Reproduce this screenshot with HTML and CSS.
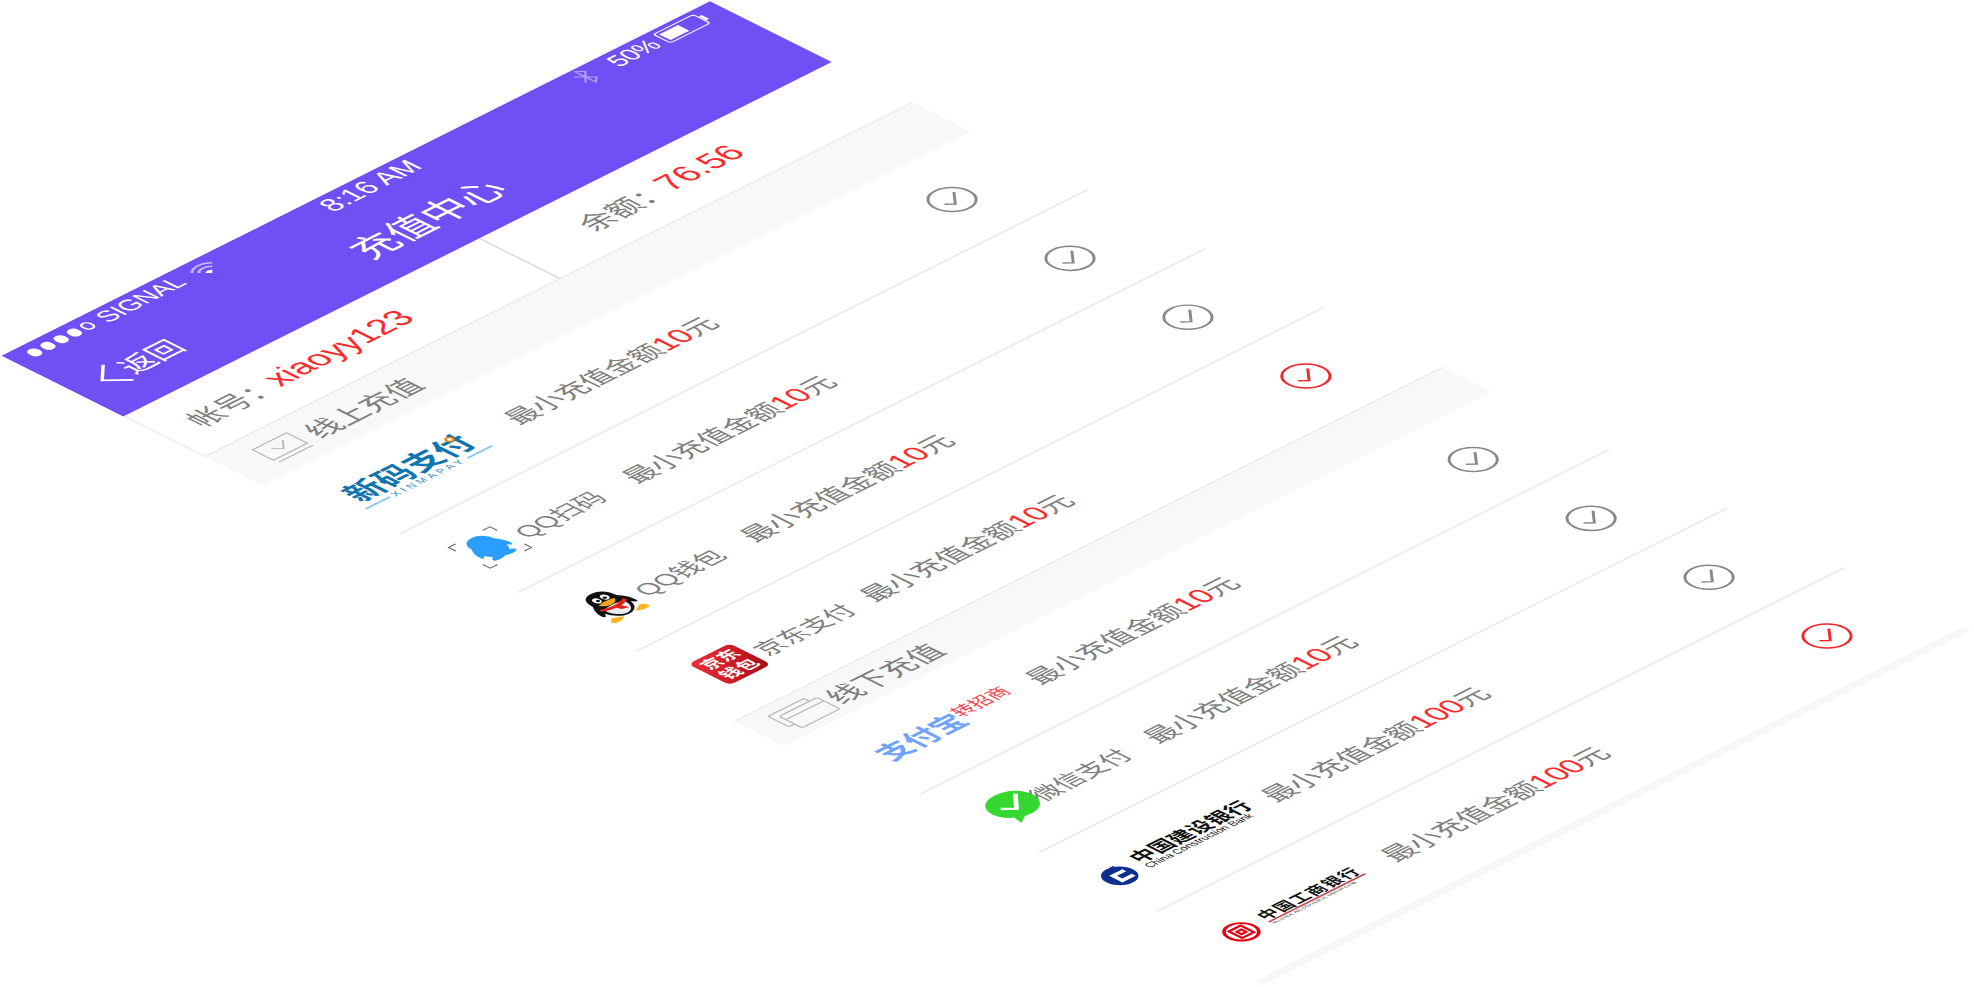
FILE: index.html
```html
<!DOCTYPE html>
<html lang="zh">
<head>
<meta charset="utf-8">
<title>充值中心</title>
<link rel="stylesheet" href="styles.css">
</head>
<body>
<div class="phone">
  <header class="head">
    <div class="status">
      <div class="status-l">
        <span class="dots"><i></i><i></i><i></i><i></i><i class="hollow"></i></span>
        <span class="signal">SIGNAL</span>
        <svg class="wifi" viewBox="0 0 14 10"><path d="M1 4a8.500 8.500 0 0 1 12 0" class="wf1"/><path d="M3 6a5.600 5.600 0 0 1 8 0" class="wf1"/><path d="M5 8a2.800 2.800 0 0 1 4 0L7 10z" class="wf2"/></svg>
      </div>
      <span class="time">8:16 AM</span>
      <div class="status-r">
        <svg class="bt" viewBox="0 0 8 12"><path d="M1 3l6 6-3 2.500V.5L7 3 1 9" /></svg>
        <span class="pct">50%</span>
        <svg class="batt" viewBox="0 0 24 10"><rect x=".5" y=".5" width="21" height="9" rx="1.500" class="bo"/><rect x="2" y="2" width="10" height="6" class="bf"/><rect x="22" y="3" width="1.500" height="4" class="bf"/></svg>
      </div>
    </div>
    <div class="nav">
      <div class="back">
        <svg class="chev" viewBox="0 0 11 18"><path d="M10 1L1.500 9 10 17"/></svg>
        <span>返回</span>
      </div>
      <h1 class="title">充值中心</h1>
    </div>
  </header>

  <section class="info">
    <div class="cell">帐号：<b class="red acct">xiaoyy123</b></div>
    <div class="cell cell-r">余额：<b class="red bal">76.56</b></div>
  </section>

  <div class="group g1">
    <svg class="gi" viewBox="0 0 20 15"><rect x=".5" y=".5" width="18" height="11"/><path d="M6 5l3.500 3 4-4.500"/><path d="M1 14h18"/></svg>
    <span>线上充值</span>
  </div>

  <div class="row line">
    <div class="brand">
      <div class="xm">
        <span class="xm-t">新码支付</span>
        <i class="xm-dot"></i>
        <div class="xm-s"><i></i><span>XINMAPAY</span><i></i></div>
      </div>
    </div>
    <div class="min">最小充值金额<em>10</em>元</div>
    <svg class="chk" viewBox="0 0 20 20"><circle cx="10" cy="10" r="9"/><path d="M5.500 10.500l3 2.700 6-6.700"/></svg>
  </div>

  <div class="row line">
    <div class="brand">
      <svg class="ic-qq" viewBox="0 0 21 21">
        <path class="brk" d="M.5 4V.5H4M17 .5h3.500V4M20.500 17v3.500H17M4 20.500H.5V17"/>
        <path class="qqb" transform="translate(-2.100 -2.100) scale(1.200)" d="M10.500 3C7.600 3 6 5.200 6 7.600 5 9 4 11.300 4.400 13.400c.4.600 1 0 1.500-.9.200 1 .8 1.900 1.400 2.500-1 .3-1.600 1-1.300 1.600.7.900 3.200.7 4.500 0 1.300.7 3.800.9 4.500 0 .3-.6-.3-1.300-1.300-1.600.6-.6 1.200-1.500 1.400-2.500.5.900 1.100 1.500 1.500.9.400-2.100-.6-4.400-1.600-5.800C15 5.200 13.400 3 10.500 3z"/>
      </svg>
      <span class="lab">QQ扫码</span>
    </div>
    <div class="min">最小充值金额<em>10</em>元</div>
    <svg class="chk" viewBox="0 0 20 20"><circle cx="10" cy="10" r="9"/><path d="M5.500 10.500l3 2.700 6-6.700"/></svg>
  </div>

  <div class="row line">
    <div class="brand">
      <svg class="ic-pg" viewBox="0 0 20 22">
        <path fill="#fbb21f" d="M3 18c-2 1-3 3-1 3.500 2 .3 4-.3 5-1.500zM17 18c2 1 3 3 1 3.500-2 .3-4-.3-5-1.500z"/>
        <path fill="#111" d="M10 .5C5.500.5 4 4 4 7.500c-1.500 2-3 5-2.500 8 .5.800 1.500-.5 2-1.500C4 17 6.500 20 10 20s6-3 6.500-6c.5 1 1.500 2.300 2 1.500.5-3-1-6-2.500-8C16 4 14.500.5 10 .5z"/>
        <path fill="#e9eef4" d="M5.200 12c1.500-1 8-1 9.600 0 .7 3-1.500 7-4.800 7s-5.500-4-4.800-7z"/>
        <ellipse fill="#fff" cx="8" cy="5.500" rx="1.500" ry="2"/><ellipse fill="#fff" cx="12" cy="5.500" rx="1.500" ry="2"/>
        <circle fill="#111" cx="8.300" cy="5.800" r=".8"/><circle fill="#111" cx="11.700" cy="5.800" r=".8"/>
        <path fill="#f9a61a" d="M6 8.500c2-1 6-1 8 0-1 1.800-2.500 2.500-4 2.500S7 10.300 6 8.500z"/>
        <path fill="#e0221a" d="M4 10.500c3 2 9 2 12 0l.4 1.800c-1.300.8-2.900 1.300-4.400 1.500l1.200 3-3-1-.7-2c-2-.1-4-.7-5.700-1.700z"/>
      </svg>
      <span class="lab">QQ钱包</span>
    </div>
    <div class="min">最小充值金额<em>10</em>元</div>
    <svg class="chk" viewBox="0 0 20 20"><circle cx="10" cy="10" r="9"/><path d="M5.500 10.500l3 2.700 6-6.700"/></svg>
  </div>

  <div class="row">
    <div class="brand">
      <div class="jd"><span>京东</span><span>钱包</span></div>
      <span class="lab">京东支付</span>
    </div>
    <div class="min">最小充值金额<em>10</em>元</div>
    <svg class="chk on" viewBox="0 0 20 20"><circle cx="10" cy="10" r="9"/><path d="M5.500 10.500l3 2.700 6-6.700"/></svg>
  </div>

  <div class="group g2">
    <svg class="gi gi2" viewBox="0 0 24 16"><rect x=".5" y=".5" width="19" height="11" rx="1"/><rect x="3.500" y="3.500" width="20" height="12" rx="1" class="gw"/><path d="M3.500 7h20"/></svg>
    <span>线下充值</span>
  </div>

  <div class="row line">
    <div class="brand">
      <div class="ali"><span class="ali-t">支付宝</span><span class="ali-s">转招商</span></div>
    </div>
    <div class="min">最小充值金额<em>10</em>元</div>
    <svg class="chk" viewBox="0 0 20 20"><circle cx="10" cy="10" r="9"/><path d="M5.500 10.500l3 2.700 6-6.700"/></svg>
  </div>

  <div class="row line">
    <div class="brand">
      <svg class="ic-wx" viewBox="0 0 14 14"><path fill="#35d82f" d="M7 .5C3.200.5.500 3 .5 6.200c0 1.900 1 3.500 2.500 4.500l-.5 2.800 2.800-1.600c.5.100 1.100.2 1.700.2 3.800 0 6.500-2.700 6.500-5.900S10.800.5 7 .5z"/><path fill="none" stroke="#fff" stroke-width="1.100" d="M3.600 5.800l2.700 2.400 4.600-5"/></svg>
      <span class="lab">微信支付</span>
    </div>
    <div class="min">最小充值金额<em>10</em>元</div>
    <svg class="chk" viewBox="0 0 20 20"><circle cx="10" cy="10" r="9"/><path d="M5.500 10.500l3 2.700 6-6.700"/></svg>
  </div>

  <div class="row line">
    <div class="brand">
      <div class="bank ccb">
        <svg class="bk-ic" viewBox="0 0 10 10"><circle cx="5" cy="5" r="5" fill="#0d2f8f"/><path fill="#fff" d="M3 3h5v1.500H4.500v2H8V8H3z"/><path fill="#0d2f8f" d="M6 0h1.500v3H6z"/></svg>
        <div class="bk-t"><span class="bk-n">中国建设银行</span><span class="bk-e">China Construction Bank</span></div>
      </div>
    </div>
    <div class="min">最小充值金额<em>100</em>元</div>
    <svg class="chk" viewBox="0 0 20 20"><circle cx="10" cy="10" r="9"/><path d="M5.500 10.500l3 2.700 6-6.700"/></svg>
  </div>

  <div class="row">
    <div class="brand">
      <div class="bank icbc">
        <svg class="bk-ic2" viewBox="0 0 12 12"><circle cx="6" cy="6" r="5.200" fill="none" stroke="#e60012" stroke-width="1.100"/><path fill="none" stroke="#e60012" stroke-width="1" d="M3.500 3.200h5v5.600h-5zM5 5h2v2H5z"/></svg>
        <div class="bk-t"><span class="bk-n">中国工商银行</span><span class="bk-e">INDUSTRIAL AND COMMERCIAL BANK OF CHINA</span></div>
      </div>
    </div>
    <div class="min">最小充值金额<em>100</em>元</div>
    <svg class="chk on" viewBox="0 0 20 20"><circle cx="10" cy="10" r="9"/><path d="M5.500 10.500l3 2.700 6-6.700"/></svg>
  </div>

  <div class="foot"></div>
</div>
</body>
</html>
```

FILE: styles.css
```css
html, body {
  margin: 0;
  width: 1974px;
  height: 987px;
  overflow: hidden;
  background: #fff;
}
.phone {
  position: absolute;
  left: 0;
  top: 0;
  width: 375px;
  transform-origin: 0 0;
  transform: matrix(1.889, -0.945, 1.902, 0.949, 1.6, 355.7);
  font-family: "Liberation Sans", "Noto Sans CJK SC", sans-serif;
  color: #808080;
  background: #fff;
}
.head {
  height: 64px;
  background: #7050f4;
  color: #fff;
}
.status {
  height: 14px;
  position: relative;
  display: flex;
  align-items: center;
  justify-content: space-between;
  font-size: 11.500px;
}
.status-l, .status-r {
  display: flex;
  align-items: center;
}
.status-l { padding-left: 8px; }
.status-r { padding-right: 9px; }
.dots {
  display: flex;
  gap: 1.600px;
}
.dots i {
  width: 5.400px;
  height: 5.400px;
  border-radius: 50%;
  background: #fff;
  box-sizing: border-box;
}
.dots i.hollow {
  background: none;
  border: .7px solid #fff;
}
.signal { margin-left: 4px; }
.wifi {
  width: 13px;
  height: 9px;
  margin-left: 5px;
}
.wf1 { fill: none; stroke: #fff; stroke-width: 1.200; opacity: .6; }
.wf2 { fill: #fff; }
.time {
  position: absolute;
  left: 0;
  right: 0;
  text-align: center;
  font-size: 13px;
}
.bt {
  width: 8px;
  height: 12px;
  fill: none;
  stroke: #fff;
  stroke-width: .8;
  opacity: .45;
  margin-right: 10px;
}
.batt {
  width: 24px;
  height: 10px;
  margin-left: 3px;
}
.bo { fill: none; stroke: #fff; stroke-width: .7; }
.bf { fill: #fff; }
.nav {
  height: 50px;
  position: relative;
  display: flex;
  align-items: center;
  justify-content: center;
}
.title {
  margin: 0 5px 0 0;
  font-size: 18.500px;
  font-weight: 400;
}
.back {
  position: absolute;
  left: 12px;
  top: 0;
  bottom: 0;
  display: flex;
  align-items: center;
  gap: 2px;
  font-size: 14px;
}
.chev {
  width: 11px;
  height: 19px;
  fill: none;
  stroke: #fff;
  stroke-width: 1.300;
}
.info {
  height: 42px;
  display: grid;
  grid-template-columns: 1fr 1fr;
  box-sizing: border-box;
  border-left: .6px solid #eee;
}
.cell {
  display: flex;
  align-items: center;
  padding-left: 14px;
  font-size: 14px;
  white-space: pre;
}
.cell-r {
  border-left: .6px solid #ddd;
  padding-left: 33px;
}
.red {
  color: #ff2a2a;
  font-weight: 400;
}
.acct { font-size: 16px; }
.bal { font-size: 16px; }
.group {
  display: flex;
  align-items: center;
  gap: 4px;
  background: #f8f8f8;
  padding-left: 16px;
  font-size: 14px;
  box-sizing: border-box;
  border-top: .5px solid #eee;
}
.g1 { height: 31px; }
.g2 { height: 26px; }
.gi {
  width: 20px;
  height: 15px;
  fill: none;
  stroke: #bbb;
  stroke-width: .8;
}
.gi2 { width: 24px; height: 16px; margin-left: -5px; margin-right: -2px; }
.gw { fill: #f8f8f8; }
.row {
  height: 62px;
  margin-left: 11px;
  display: grid;
  grid-template-columns: 89px 1fr 20px;
  align-items: center;
  padding-right: 31px;
  box-sizing: border-box;
}
.line { border-bottom: .5px solid #ebebeb; }
.brand {
  display: flex;
  align-items: center;
  white-space: nowrap;
}
.min { font-size: 13px; white-space: nowrap; }
.min em {
  font-style: normal;
  color: #ff2a2a;
  font-size: 14px;
}
.lab { font-size: 12px; }
.chk {
  width: 20px;
  height: 20px;
  fill: none;
  stroke: #888;
  stroke-width: 1.100;
}
.chk.on { stroke: #f5262a; }
.xm {
  position: relative;
  margin-left: 6px;
  color: #0f75ae;
  line-height: 1;
}
.xm-t {
  display: block;
  font-size: 15.500px;
  font-weight: 700;
  font-family: "Noto Sans CJK SC", sans-serif;
  line-height: 16px;
}
.xm-dot {
  position: absolute;
  left: 55px;
  top: 3px;
  width: 2px;
  height: 2px;
  border: 1px solid #ee8012;
  border-radius: 50%;
  background: #fff;
}
.xm-s {
  display: flex;
  align-items: center;
  gap: 2px;
  margin: 1px -3px 0 -2px;
  font-size: 5px;
  letter-spacing: 1.600px;
  color: #3b8fc0;
}
.xm-s i {
  flex: 1;
  height: .5px;
  background: #88c4ea;
}
.ic-qq {
  width: 23px;
  height: 23px;
  margin-left: 5px;
  margin-right: 3px;
}
.brk { fill: none; stroke: #666; stroke-width: .6; }
.qqb { fill: #2a9dff; }
.ic-pg {
  width: 21px;
  height: 23px;
  margin-left: 8px;
  margin-right: 3px;
}
.jd {
  width: 22px;
  height: 22px;
  margin-left: 7px;
  margin-right: 3px;
  flex: none;
  border-radius: 3px;
  background: linear-gradient(135deg, #f03038, #a90b14);
  color: #fff;
  font-size: 8.500px;
  line-height: 10px;
  text-align: center;
  display: flex;
  flex-direction: column;
  justify-content: center;
  font-weight: 700;
}
.ali {
  display: flex;
  align-items: center;
  margin-left: 9px;
  font-family: "Noto Sans CJK SC", sans-serif;
}
.ali-t {
  font-size: 14px;
  font-weight: 700;
  color: #6fa3ff;
}
.ali-s {
  font-size: 9px;
  color: #ff3b47;
  margin-left: 0;
  margin-top: -4px;
}
.ic-wx {
  width: 23px;
  height: 23px;
  margin-left: 7px;
  margin-right: -2px;
  flex: none;
}
.bank {
  display: flex;
  align-items: center;
}
.bk-t {
  display: flex;
  flex-direction: column;
  color: #111;
}
.bk-n {
  font-family: "Noto Sans CJK SC", sans-serif;
  font-weight: 700;
  line-height: 9px;
}
.bk-e { white-space: nowrap; }
.ccb { margin-left: 2px; }
.ccb .bk-ic { width: 14px; height: 14px; margin-right: 5px; margin-top: 5px; flex: none; }
.ccb .bk-n { font-size: 10px; line-height: 10px; }
.ccb .bk-e { font-size: 5px; line-height: 5px; }
.icbc { margin-left: 4px; }
.icbc .bk-ic2 { width: 15px; height: 15px; margin-right: 5px; margin-top: 3px; flex: none; }
.icbc .bk-n { font-size: 8px; letter-spacing: .5px; border-bottom: .6px solid #c8474d; }
.icbc .bk-e { font-size: 1.900px; line-height: 3px; }
.foot {
  height: 4px;
  background: #f7f7f7;
}
```
